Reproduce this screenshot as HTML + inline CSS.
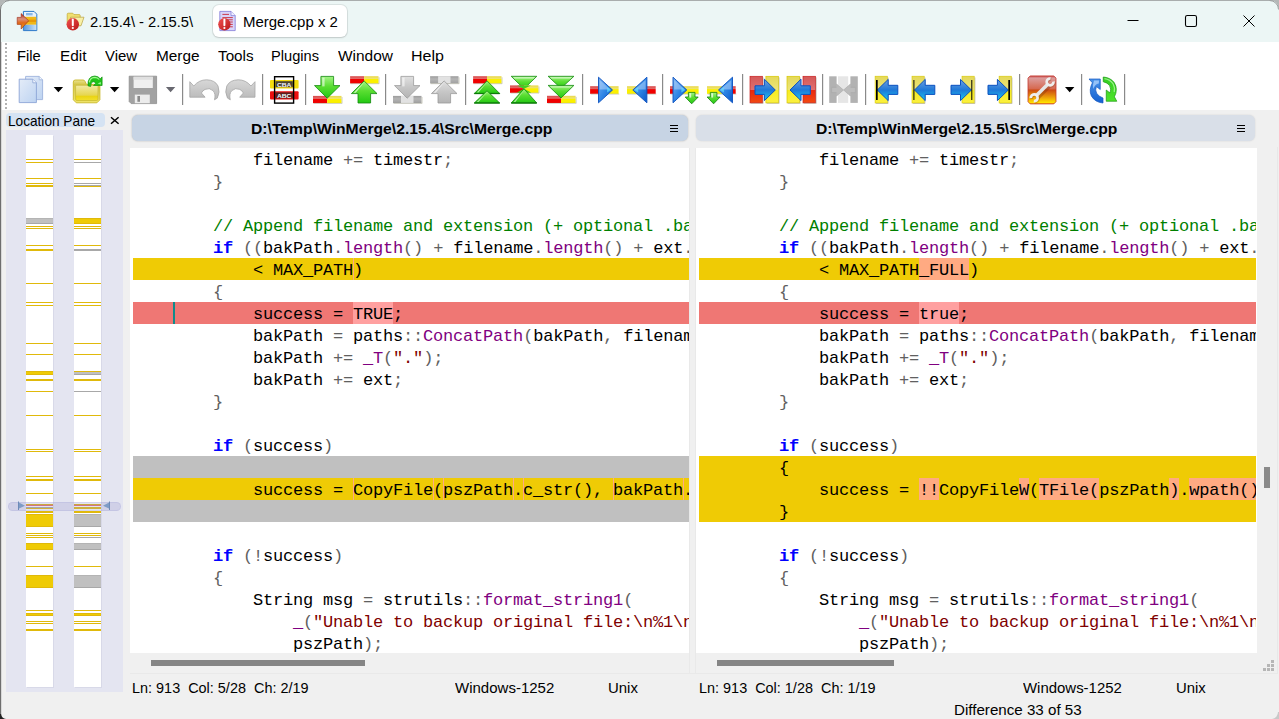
<!DOCTYPE html><html><head><meta charset="utf-8"><title>WinMerge</title><style>
*{box-sizing:border-box;margin:0;padding:0}
html,body{width:1279px;height:719px;overflow:hidden;background:#f0f0f0;font-family:"Liberation Sans",sans-serif}
.abs{position:absolute}
.lb{position:absolute;white-space:pre;transform-origin:0 0;display:block}
#title{position:absolute;left:0;top:0;width:1279px;height:42px;background:#ecf6f5}
#menu{position:absolute;left:0;top:42px;width:1279px;height:68px;background:#fff}
.sep{position:absolute;top:74px;width:1px;height:31px;background:#a0a0a0}
.ico{position:absolute;top:76px;width:28px;height:28px}
.dd{position:absolute;top:87px;width:0;height:0;border-left:4.5px solid transparent;border-right:4.5px solid transparent;border-top:5px solid #000}
.ed{position:absolute;top:148px;height:505px;background:#fff;overflow:hidden}
.row{position:absolute;left:3px;height:22px;line-height:25px;overflow:hidden;white-space:pre;font-family:"Liberation Mono",monospace;font-size:17px;letter-spacing:-0.2px;color:#000}
.k{color:#0000ff;font-weight:bold}
.c{color:#008000}
.o{color:#606060}
.f{color:#800080}
.s{color:#800000}
.y{background:#efcb05}
.r{background:#ef7774}
.g{background:#c0c0c0}
.w1{background:#ffaa82;padding:5px 0}
.w2{background:#ffa0a0;padding:5px 0}
.mk{position:absolute;top:0;width:1.7px;height:22px;background:#ffaa82}
.hdr{position:absolute;top:114.6px;height:26.6px;border-radius:6px}
.lp{position:absolute;background:#fff;top:135px;width:27px;height:552px;box-shadow:1px 1px 0 #d8d9e8}
.ln{position:absolute;left:0;width:27px}
</style></head><body>
<div id="title"></div>
<div class="abs" style="left:213px;top:5px;width:134px;height:32px;background:#fff;border-radius:6px;box-shadow:0 0 0 1px rgba(0,0,0,.07),0 1px 2px rgba(0,0,0,.12)"></div>
<span class="lb" style="left:90.26px;top:13px;font-size:15.5px;line-height:17px;height:17px;color:#000;transform:scaleX(0.9499);">2.15.4\ - 2.15.5\</span>
<span class="lb" style="left:242.50px;top:13px;font-size:15.5px;line-height:17px;height:17px;color:#000;transform:scaleX(0.9659);">Merge.cpp x 2</span>
<svg class="abs" style="left:0;top:0" width="360" height="42" viewBox="0 0 360 42"><defs>
<linearGradient id="tR" x1="0" y1="0" x2="1" y2="1"><stop offset="0" stop-color="#f05050"/><stop offset="1" stop-color="#b81818"/></linearGradient>
<linearGradient id="tA" x1="0" y1="0" x2="0" y2="1"><stop offset="0" stop-color="#b02010"/><stop offset=".35" stop-color="#d89080"/><stop offset=".6" stop-color="#e06818"/><stop offset="1" stop-color="#f0a010"/></linearGradient>
<linearGradient id="tD" x1="0" y1="0" x2="1" y2="0"><stop offset="0" stop-color="#5a9ade"/><stop offset="1" stop-color="#c8e0f8"/></linearGradient>
</defs><path d="M23.400 11.400h10.600l2.800 2.800v16.400h-13.400z" fill="#e8f2fc" stroke="#2a78c8" stroke-width="1"/><rect x="26" y="13" width="6.600" height="2.400" fill="#8ab8e8"/><rect x="24" y="16.800" width="12.200" height="8" fill="#f0b818"/><rect x="24" y="19.600" width="12.200" height="2.400" fill="#e89808"/><rect x="24" y="24.800" width="12.200" height="5.200" fill="url(#tD)"/><path d="M17.200 17.400h4v-3.800l7.400 7.200l-7.400 8.200v-4.600h-4z" fill="url(#tA)" stroke="#a02810" stroke-width=".6"/><path d="M67.200 14.200q0-1 1-1h4.600l1.200 1.400h5.200q1 0 1 1v9.800h-13z" fill="#f0e070" stroke="#c0a830" stroke-width=".7"/><path d="M70.600 17.200h13.400l-3 8.600h-12.400z" fill="#f8f0a8" stroke="#b8a040" stroke-width=".7"/><circle cx="72.800" cy="24.300" r="6.200" fill="url(#tR)"/><path d="M72.800 19.600v5.600" stroke="#fff" stroke-width="2" stroke-linecap="round"/><circle cx="72.800" cy="28" r="1.100" fill="#fff"/><path d="M219.800 11.400h11.200l4.200 4.200v15h-15.400z" fill="#d8d4fa" stroke="#8078d8" stroke-width=".8"/><path d="M231 11.400v4.200h4.200" fill="#f0f0ff" stroke="#8078d8" stroke-width=".7"/><path d="M222.4 14.4H229" stroke="#c82838" stroke-width=".9"/><path d="M222.4 17.6H232.8" stroke="#c82838" stroke-width=".9"/><path d="M222.4 19.8H232.8" stroke="#c82838" stroke-width=".9"/><path d="M222.4 22H232.8" stroke="#c82838" stroke-width=".9"/><path d="M222.4 24.4H232.8" stroke="#c82838" stroke-width=".9"/><path d="M222.4 26.8H232.8" stroke="#c82838" stroke-width=".9"/><circle cx="224.400" cy="24.300" r="6.200" fill="url(#tR)"/><path d="M224.400 19.600v5.600" stroke="#fff" stroke-width="2" stroke-linecap="round"/><circle cx="224.400" cy="28" r="1.100" fill="#fff"/></svg>
<svg class="abs" style="left:1120px;top:10px" width="150" height="22" viewBox="0 0 150 22"><path d="M7.5 10.5h11" stroke="#000" stroke-width="1" fill="none"/><rect x="65.5" y="5.5" width="11" height="11" rx="1.8" stroke="#000" stroke-width="1.1" fill="none"/><path d="M123.5 5.5l11 11M134.5 5.5l-11 11" stroke="#000" stroke-width="1" fill="none"/></svg>
<div id="menu"></div>
<span class="lb" style="left:17.42px;top:47px;font-size:15.5px;line-height:17px;height:17px;color:#000;transform:scaleX(0.9483);">File</span>
<span class="lb" style="left:59.57px;top:47px;font-size:15.5px;line-height:17px;height:17px;color:#000;transform:scaleX(0.9944);">Edit</span>
<span class="lb" style="left:104.93px;top:47px;font-size:15.5px;line-height:17px;height:17px;color:#000;transform:scaleX(0.9625);">View</span>
<span class="lb" style="left:155.57px;top:47px;font-size:15.5px;line-height:17px;height:17px;color:#000;transform:scaleX(0.9909);">Merge</span>
<span class="lb" style="left:218.09px;top:47px;font-size:15.5px;line-height:17px;height:17px;color:#000;transform:scaleX(0.9847);">Tools</span>
<span class="lb" style="left:271.33px;top:47px;font-size:15.5px;line-height:17px;height:17px;color:#000;transform:scaleX(0.9438);">Plugins</span>
<span class="lb" style="left:338.02px;top:47px;font-size:15.5px;line-height:17px;height:17px;color:#000;transform:scaleX(0.9963);">Window</span>
<span class="lb" style="left:411.32px;top:47px;font-size:15.5px;line-height:17px;height:17px;color:#000;transform:scaleX(1.0336);">Help</span>
<div class="abs" style="left:5px;top:43px;width:2px;height:66px;background:repeating-linear-gradient(to bottom,#b2b2b2 0,#b2b2b2 2px,transparent 2px,transparent 4px)"></div>
<svg class="abs" style="left:0;top:70px" width="1279" height="40" viewBox="0 70 1279 40"><defs>
<linearGradient id="gG" x1="0" y1="0" x2="0" y2="1"><stop offset="0" stop-color="#a2f484"/><stop offset=".45" stop-color="#5ade32"/><stop offset="1" stop-color="#22c812"/></linearGradient>
<linearGradient id="gGr" x1="0" y1="0" x2="0" y2="1"><stop offset="0" stop-color="#e0e0e0"/><stop offset=".5" stop-color="#c6c6c6"/><stop offset="1" stop-color="#b4b4b4"/></linearGradient>
<linearGradient id="gR" x1="0" y1="0" x2="0" y2="1"><stop offset="0" stop-color="#d84a4a"/><stop offset=".35" stop-color="#e36a6a"/><stop offset=".45" stop-color="#f00000"/><stop offset="1" stop-color="#f00000"/></linearGradient>
<linearGradient id="gY" x1="0" y1="0" x2="0" y2="1"><stop offset="0" stop-color="#e8d84a"/><stop offset=".35" stop-color="#f0e470"/><stop offset=".45" stop-color="#fbf000"/><stop offset="1" stop-color="#fbf000"/></linearGradient>
<linearGradient id="gGb" x1="0" y1="0" x2="0" y2="1"><stop offset="0" stop-color="#9c9c9c"/><stop offset=".4" stop-color="#b4b4b4"/><stop offset="1" stop-color="#a0a0a0"/></linearGradient>
<linearGradient id="gB" x1="0" y1="0" x2="1" y2="1"><stop offset="0" stop-color="#7ab0ee"/><stop offset=".5" stop-color="#2f86e6"/><stop offset="1" stop-color="#0a58c8"/></linearGradient>
<linearGradient id="gBh" x1="0" y1="0" x2="0" y2="1"><stop offset="0" stop-color="#6ea0e0"/><stop offset=".5" stop-color="#1f78d8"/><stop offset="1" stop-color="#18c8f0"/></linearGradient>
<linearGradient id="gDoc" x1="0" y1="0" x2="1" y2="1"><stop offset="0" stop-color="#e4ecf8"/><stop offset="1" stop-color="#bdd3f1"/></linearGradient>
<linearGradient id="gFold" x1="0" y1="0" x2="0" y2="1"><stop offset="0" stop-color="#f2eaa4"/><stop offset=".65" stop-color="#e6d650"/><stop offset=".72" stop-color="#ead414"/><stop offset="1" stop-color="#f2e02c"/></linearGradient><linearGradient id="gFoldB" x1="0" y1="0" x2="0" y2="1"><stop offset="0" stop-color="#ece290"/><stop offset=".2" stop-color="#d4c648"/><stop offset="1" stop-color="#f0e468"/></linearGradient>
<linearGradient id="gRedV" x1="0" y1="0" x2="0" y2="1"><stop offset="0" stop-color="#d45858"/><stop offset=".5" stop-color="#e07070"/><stop offset=".52" stop-color="#e82810"/><stop offset="1" stop-color="#f24a10"/></linearGradient>
<linearGradient id="gYelV" x1="0" y1="0" x2="0" y2="1"><stop offset="0" stop-color="#e4d858"/><stop offset=".5" stop-color="#ece478"/><stop offset=".52" stop-color="#f6ec20"/><stop offset="1" stop-color="#fbf040"/></linearGradient>
<linearGradient id="gOpt" x1="0" y1="0" x2="0" y2="1"><stop offset="0" stop-color="#c84848"/><stop offset=".08" stop-color="#dc9c9c"/><stop offset=".47" stop-color="#d6684e"/><stop offset=".5" stop-color="#cc4a12"/><stop offset=".75" stop-color="#ea9a0a"/><stop offset=".95" stop-color="#ffe000"/><stop offset="1" stop-color="#f8a010"/></linearGradient>
<linearGradient id="gRf1" x1="0" y1="0" x2="0" y2="1"><stop offset="0" stop-color="#4a94ea"/><stop offset="1" stop-color="#1460d0"/></linearGradient><linearGradient id="gRf2" x1="0" y1="0" x2="0" y2="1"><stop offset="0" stop-color="#30cc20"/><stop offset="1" stop-color="#4ee42a"/></linearGradient><linearGradient id="gUndo" x1="0" y1="0" x2="0" y2="1"><stop offset="0" stop-color="#d8d8d8"/><stop offset="1" stop-color="#b8b8b8"/></linearGradient>
</defs><rect x="182" y="74" width="1.2" height="31" fill="#8a8a8a"/><rect x="262" y="74" width="1.2" height="31" fill="#8a8a8a"/><rect x="305" y="74" width="1.2" height="31" fill="#8a8a8a"/><rect x="385" y="74" width="1.2" height="31" fill="#8a8a8a"/><rect x="465" y="74" width="1.2" height="31" fill="#8a8a8a"/><rect x="582" y="74" width="1.2" height="31" fill="#8a8a8a"/><rect x="662" y="74" width="1.2" height="31" fill="#8a8a8a"/><rect x="742" y="74" width="1.2" height="31" fill="#8a8a8a"/><rect x="822" y="74" width="1.2" height="31" fill="#8a8a8a"/><rect x="865" y="74" width="1.2" height="31" fill="#8a8a8a"/><rect x="1019" y="74" width="1.2" height="31" fill="#8a8a8a"/><rect x="1081" y="74" width="1.2" height="31" fill="#8a8a8a"/><rect x="1124" y="74" width="1.2" height="31" fill="#8a8a8a"/><path d="M53.7 87h9.4l-4.7 5.2z" fill="#000"/><path d="M109.9 87h9.4l-4.7 5.2z" fill="#000"/><path d="M165.9 87h9.4l-4.7 5.2z" fill="#686870"/><path d="M1065 87h9.4l-4.7 5.2z" fill="#000"/><path d="M25.6 76.4h13.6l3.4 3.4v19.8h-17z" fill="url(#gDoc)" stroke="#9db2dc" stroke-width=".9"/><path d="M39.2 76.4v3.4h3.4" fill="#f4f8fd" stroke="#9db2dc" stroke-width=".8"/><path d="M19.2 79.2h13.6l3.6 3.6v19.8h-17.2z" fill="url(#gDoc)" stroke="#8ba4d6" stroke-width=".9"/><path d="M32.8 79.2v3.6h3.6" fill="#f4f8fd" stroke="#8ba4d6" stroke-width=".8"/><path d="M73.300 82q0-2 2-2h7.800q1.200 0 1.800 1.200l1.600 3.200h11.400q2 0 2 2v13.400l-3 3h-20.600l-3-3z" fill="url(#gFoldB)" stroke="#c8b828" stroke-width=".9"/><path d="M75.600 86.300q0-1 1-1h20.400q1 0 1 1v12.800q0 1.400-1.400 1.400h-19.600q-1.400 0-1.400-1.400z" fill="url(#gFold)" stroke="#c0b030" stroke-width=".6"/><path d="M88 85.800q-.6-9.600 6.800-9.800q3.600.2 5.400 2.800l1.900-1.900v8.600h-8.600l2.300-2.300q-1-1.600-2.700-1.500q-2.400.4-2.500 4.800z" fill="#20c418" stroke="#109010" stroke-width=".7" stroke-linejoin="round"/><path d="M89.400 82.400q.6-5 5.400-5.100q2.800.2 4.400 2.200" stroke="#a0f890" stroke-width="1.200" fill="none"/><path d="M97.600 83.600l3.200-1.600v2.400z" fill="#b8ffb0" opacity=".8"/><path d="M129.2 76.2h27.400v27.400h-25.400l-2-2z" fill="#a2a2a2" stroke="#8e8e8e" stroke-width=".8"/><rect x="133.6" y="76.800" width="19.200" height="11.200" fill="#f0f0f0"/><rect x="133.600" y="76.800" width="19.200" height="3" fill="#e0e0e0"/><rect x="134.800" y="94.600" width="15" height="8.600" fill="#ececec"/><rect x="137.400" y="96" width="2.600" height="5.800" fill="#8a8a8a"/><path d="M189.800 81.700L193.800 86Q199 79.800 206.500 79.800Q215 80 218 86Q220.400 92 217.300 98.100L214.500 99.800Q216 94 213 90.600Q209.500 87.400 205 89.400Q202.600 90.600 201.400 93L205.100 97.200H189.800Z" fill="url(#gUndo)" stroke="#a6a6a6" stroke-width=".8"/><g transform="translate(444.8 0) scale(-1 1)"><path d="M189.800 81.700L193.800 86Q199 79.800 206.500 79.800Q215 80 218 86Q220.400 92 217.300 98.100L214.500 99.800Q216 94 213 90.600Q209.500 87.400 205 89.400Q202.600 90.600 201.400 93L205.100 97.200H189.800Z" fill="url(#gUndo)" stroke="#a6a6a6" stroke-width=".8"/></g><rect x="270" y="80" width="28.600" height="8.400" rx="1" fill="#f4dc10"/><rect x="270" y="91.200" width="28.600" height="8.400" rx="1" fill="#ec1010"/><rect x="275.600" y="81.200" width="17.200" height="6" fill="#4a4430"/><rect x="275.600" y="92.400" width="17.200" height="6" fill="#5a2020"/><text x="284.200" y="86.700" font-family="Liberation Sans" font-weight="bold" font-size="6.200" fill="#f4f4ff" text-anchor="middle" textLength="14.500" lengthAdjust="spacingAndGlyphs">CBA</text><text x="284.200" y="97.900" font-family="Liberation Sans" font-weight="bold" font-size="6.200" fill="#f4ffff" text-anchor="middle" textLength="14.500" lengthAdjust="spacingAndGlyphs">ABC</text><rect x="274.600" y="76.700" width="19" height="26.400" fill="none" stroke="#000" stroke-width="1.400"/><rect x="313" y="95.9" width="14.199999999999989" height="7.2" fill="url(#gR)"/><rect x="327.2" y="95.9" width="14.300000000000011" height="7.2" fill="url(#gY)"/><path d="M313.6 103.4h28.5v-6.4" stroke="#8a8a70" stroke-width=".7" fill="none" opacity=".55"/><path d="M320.9 76.400h12.700v9.200h6.400l-12.800 12.600l-12.700-12.600h6.400z" fill="url(#gG)" stroke="#12880e" stroke-width=".8"/><path d="M322.2 77.600h2.400v8.800h-2.400z" fill="#fff" opacity=".55"/><rect x="350.1" y="76.2" width="14.0" height="7.2" fill="url(#gR)"/><rect x="364.1" y="76.2" width="14.399999999999977" height="7.2" fill="url(#gY)"/><path d="M350.70000000000005 83.7h28.4v-6.4" stroke="#8a8a70" stroke-width=".7" fill="none" opacity=".55"/><path d="M364.1 80.900l12.900 12.700h-6.400v9.400h-12.600v-9.400h-6.600z" fill="url(#gG)" stroke="#12880e" stroke-width=".8"/><path d="M364.1 82.400l-10.400 10.400h2z" fill="#fff" opacity=".7"/><rect x="393" y="95.9" width="28.5" height="7.2" fill="url(#gGb)"/><rect x="401" y="95.9" width="12.5" height="7.2" fill="#e2e2e2"/><path d="M393.6 103.4h28.5v-6.4" stroke="#8a8a70" stroke-width=".7" fill="none" opacity=".55"/><path d="M400.9 76.400h12.700v9.200h6.400l-12.800 12.600l-12.700-12.600h6.400z" fill="url(#gGr)" stroke="#9a9a9a" stroke-width=".8"/><path d="M402.2 77.600h2.400v8.800h-2.400z" fill="#fff" opacity=".55"/><rect x="430.1" y="76.2" width="28.4" height="7.2" fill="url(#gGb)"/><rect x="438.1" y="76.2" width="12.399999999999999" height="7.2" fill="#e2e2e2"/><path d="M430.70000000000005 83.7h28.4v-6.4" stroke="#8a8a70" stroke-width=".7" fill="none" opacity=".55"/><path d="M444.1 80.900l12.900 12.700h-6.400v9.400h-12.600v-9.400h-6.600z" fill="url(#gGr)" stroke="#9a9a9a" stroke-width=".8"/><path d="M444.1 82.400l-10.400 10.400h2z" fill="#fff" opacity=".7"/><rect x="473.1" y="76.2" width="13.899999999999977" height="7.2" fill="url(#gR)"/><rect x="487" y="76.2" width="14.5" height="7.2" fill="url(#gY)"/><path d="M473.70000000000005 83.7h28.4v-6.4" stroke="#8a8a70" stroke-width=".7" fill="none" opacity=".55"/><path d="M487 80.8l12.7 12.700000000000003h-25.4z" fill="url(#gG)" stroke="#12880e" stroke-width=".8"/><path d="M487 82.2l-10.299999999999999 10.300000000000002h1.800z" fill="#fff" opacity=".6"/><path d="M474.3 93.5h25.4" stroke="#0e7a0a" stroke-width="1.300"/><path d="M487 90.8l12.7 12.200000000000003h-25.4z" fill="url(#gG)" stroke="#12880e" stroke-width=".8"/><path d="M487 92.2l-10.299999999999999 9.800000000000002h1.800z" fill="#fff" opacity=".6"/><path d="M474.3 103h25.4" stroke="#0e7a0a" stroke-width="1.300"/><path d="M511.2 76.3h25.6l-12.8 12.5z" fill="url(#gG)" stroke="#12880e" stroke-width=".8"/><path d="M513.2 77.3h21.6l-1.200 1.200h-19.200000000000003z" fill="#fff" opacity=".6"/><rect x="510" y="85.4" width="14" height="7.4" fill="url(#gR)"/><rect x="524" y="85.4" width="14.399999999999977" height="7.4" fill="url(#gY)"/><path d="M510.6 93.10000000000001h28.4v-6.6000000000000005" stroke="#8a8a70" stroke-width=".7" fill="none" opacity=".55"/><path d="M517 85.400h14l-7 3.400z" fill="#3ed222"/><path d="M516.600 92.800h14.800l-7.400-4z" fill="#3ed222"/><path d="M524 88.8l12.8 14.200000000000003h-25.6z" fill="url(#gG)" stroke="#12880e" stroke-width=".8"/><path d="M524 90.2l-10.4 11.800000000000002h1.800z" fill="#fff" opacity=".6"/><path d="M511.2 103h25.6" stroke="#0e7a0a" stroke-width="1.300"/><path d="M548.1 76.3h25.8l-12.9 12.0z" fill="url(#gG)" stroke="#12880e" stroke-width=".8"/><path d="M550.1 77.3h21.8l-1.200 1.200h-19.4z" fill="#fff" opacity=".6"/><rect x="547" y="95.8" width="14" height="7.2" fill="url(#gR)"/><rect x="561" y="95.8" width="14.600000000000023" height="7.2" fill="url(#gY)"/><path d="M547.6 103.3h28.6v-6.4" stroke="#8a8a70" stroke-width=".7" fill="none" opacity=".55"/><path d="M548.1 85.4h25.8l-12.9 12.599999999999994z" fill="url(#gG)" stroke="#12880e" stroke-width=".8"/><path d="M550.1 86.4h21.8l-1.200 1.200h-19.4z" fill="#fff" opacity=".6"/><rect x="590.1" y="86.200" width="9.899999999999977" height="7.600" fill="url(#gR)"/><path d="M590.7 94.100h9.899999999999977" stroke="#8a8a70" stroke-width=".7" opacity=".55"/><rect x="606" y="86.200" width="12.600000000000023" height="7.600" fill="url(#gY)"/><path d="M606.6 94.100h12.600000000000023" stroke="#8a8a70" stroke-width=".7" opacity=".55"/><path d="M598.5 77.200l14.0 12.800l-14.0 12.800z" fill="url(#gB)" stroke="#0a50c0" stroke-width=".9" stroke-linejoin="round"/><path d="M599.7 80l10.8 9.600h-10.8z" fill="#cfe4ff" opacity=".45"/><path d="M611.1 90l-4 -3l0 5.600z" fill="#60e0ff" opacity=".7"/><rect x="627" y="86.200" width="13" height="7.600" fill="url(#gY)"/><path d="M627.6 94.100h13" stroke="#8a8a70" stroke-width=".7" opacity=".55"/><rect x="646" y="86.200" width="9.700000000000045" height="7.600" fill="url(#gR)"/><path d="M646.6 94.100h9.700000000000045" stroke="#8a8a70" stroke-width=".7" opacity=".55"/><path d="M646.9 77.200l-14.100000000000023 12.800l14.100000000000023 12.800z" fill="url(#gB)" stroke="#0a50c0" stroke-width=".9" stroke-linejoin="round"/><path d="M645.6999999999999 80l-10.900000000000023 9.600h10.900000000000023z" fill="#cfe4ff" opacity=".45"/><path d="M634.1999999999999 90l4 -3l0 5.600z" fill="#60e0ff" opacity=".7"/><rect x="670" y="86.200" width="4" height="7.600" fill="url(#gR)"/><path d="M670.6 94.100h4" stroke="#8a8a70" stroke-width=".7" opacity=".55"/><rect x="680" y="86.200" width="18.600000000000023" height="7.600" fill="url(#gY)"/><path d="M680.6 94.100h18.600000000000023" stroke="#8a8a70" stroke-width=".7" opacity=".55"/><path d="M673 77.200l13.799999999999955 12.800l-13.799999999999955 12.800z" fill="url(#gB)" stroke="#0a50c0" stroke-width=".9" stroke-linejoin="round"/><path d="M674.2 80l10.599999999999955 9.600h-10.599999999999955z" fill="#cfe4ff" opacity=".45"/><path d="M685.4 90l-4 -3l0 5.600z" fill="#60e0ff" opacity=".7"/><path d="M688.4000000000001 92.400h6.600v4.600h3.200l-6.500 6.800l-6.500-6.800h3.200z" fill="url(#gG)" stroke="#12800e" stroke-width=".8"/><path d="M689.4000000000001 93.200h1.800v4.400h-1.800z" fill="#fff" opacity=".7"/><rect x="707" y="86.200" width="19" height="7.600" fill="url(#gY)"/><path d="M707.6 94.100h19" stroke="#8a8a70" stroke-width=".7" opacity=".55"/><rect x="731.5" y="86.200" width="4.2000000000000455" height="7.600" fill="url(#gR)"/><path d="M732.1 94.100h4.2000000000000455" stroke="#8a8a70" stroke-width=".7" opacity=".55"/><path d="M732.5 77.200l-14.0 12.800l14.0 12.800z" fill="url(#gB)" stroke="#0a50c0" stroke-width=".9" stroke-linejoin="round"/><path d="M731.3 80l-10.8 9.600h10.8z" fill="#cfe4ff" opacity=".45"/><path d="M719.9 90l4 -3l0 5.600z" fill="#60e0ff" opacity=".7"/><path d="M710.3000000000001 92.400h6.600v4.600h3.200l-6.500 6.800l-6.500-6.800h3.200z" fill="url(#gG)" stroke="#12800e" stroke-width=".8"/><path d="M711.3000000000001 93.200h1.800v4.400h-1.800z" fill="#fff" opacity=".7"/><rect x="750" y="76.300" width="12.4" height="26.600" fill="url(#gRedV)" stroke="#c82020" stroke-width=".7"/><path d="M750.8 103.400h12.4v-26" stroke="#807860" stroke-width=".7" fill="none" opacity=".5"/><rect x="765.9" y="76.300" width="12.5" height="26.600" fill="url(#gYelV)" stroke="#d8c800" stroke-width=".7"/><path d="M766.6999999999999 103.400h12.5v-26" stroke="#807860" stroke-width=".7" fill="none" opacity=".5"/><path d="M755 85.800H764.4V79.200L775.3 90L764.4 100.600V94.400H755z" fill="url(#gBh)" stroke="#0a50c0" stroke-width="1" stroke-linejoin="round"/><rect x="787" y="76.300" width="12.5" height="26.600" fill="url(#gYelV)" stroke="#d8c800" stroke-width=".7"/><path d="M787.8 103.400h12.5v-26" stroke="#807860" stroke-width=".7" fill="none" opacity=".5"/><rect x="803" y="76.300" width="12.5" height="26.600" fill="url(#gRedV)" stroke="#c82020" stroke-width=".7"/><path d="M803.8 103.400h12.5v-26" stroke="#807860" stroke-width=".7" fill="none" opacity=".5"/><path d="M810.3 85.800H801V79.200L790 90L801 100.600V94.400H810.3z" fill="url(#gBh)" stroke="#0a50c0" stroke-width="1" stroke-linejoin="round"/><rect x="829.200" y="76.300" width="7.400" height="26.600" fill="#b2b2b2"/><rect x="838" y="76.300" width="10.200" height="26.600" fill="#e6e6e6"/><rect x="850.400" y="76.300" width="7.400" height="26.600" fill="#b2b2b2"/><path d="M831.600 87.400h5v-3.400l6.800 6l-6.800 6v-3.400h-5z" fill="#bcbcbc" stroke="#a8a8a8" stroke-width=".6"/><path d="M855.400 87.400h-5v-3.400l-6.800 6l6.800 6v-3.400h5z" fill="#bcbcbc" stroke="#a8a8a8" stroke-width=".6"/><rect x="875.1" y="76.200" width="12.200" height="26.800" fill="url(#gYelV)" stroke="#d8c800" stroke-width=".6"/><path d="M875.9 103.500h12.200v-26" stroke="#807860" stroke-width=".7" fill="none" opacity=".5"/><path d="M877.3 90L888.2 79.400V85.300H897.8V94.400H888.2V100.600z" fill="url(#gBh)" stroke="#0a50c0" stroke-width="1" stroke-linejoin="round"/><rect x="876" y="80" width="1.700" height="20" fill="#000"/><rect x="912" y="76.200" width="12.200" height="26.800" fill="url(#gYelV)" stroke="#d8c800" stroke-width=".6"/><path d="M912.8 103.500h12.200v-26" stroke="#807860" stroke-width=".7" fill="none" opacity=".5"/><path d="M914.5 90L925.2 79.400V85.300H934.8V94.400H925.2V100.600z" fill="url(#gBh)" stroke="#0a50c0" stroke-width="1" stroke-linejoin="round"/><rect x="913.400" y="80" width="1" height="20" fill="#000"/><rect x="962" y="76.200" width="12.200" height="26.800" fill="url(#gYelV)" stroke="#d8c800" stroke-width=".6"/><path d="M962.8 103.500h12.200v-26" stroke="#807860" stroke-width=".7" fill="none" opacity=".5"/><path d="M971.4 90L960.5 79.400V85.300H951V94.400H960.5V100.600z" fill="url(#gBh)" stroke="#0a50c0" stroke-width="1" stroke-linejoin="round"/><rect x="971.300" y="80" width="1" height="20" fill="#000"/><rect x="999.1" y="76.200" width="12.200" height="26.800" fill="url(#gYelV)" stroke="#d8c800" stroke-width=".6"/><path d="M999.9 103.500h12.200v-26" stroke="#807860" stroke-width=".7" fill="none" opacity=".5"/><path d="M1008.3 90L997.4 79.400V85.300H988V94.400H997.4V100.600z" fill="url(#gBh)" stroke="#0a50c0" stroke-width="1" stroke-linejoin="round"/><rect x="1008.300" y="80" width="1.700" height="20" fill="#000"/><path d="M1030.200 75.900h23.600l2.200 2.200v23.600l-2.200 2.200h-23.600l-2.200-2.200v-23.600z" fill="url(#gOpt)" stroke="#c43a30" stroke-width=".8"/><path d="M1037.400 96.600L1048.400 85.600" stroke="#7a3008" stroke-width="3.600" opacity=".35" transform="translate(.9 .9)"/><path d="M1053.47 81.49A3.4 3.4 0 1 1 1050.51 78.53" stroke="#7a3008" stroke-width="2.800" fill="none" opacity=".3" transform="translate(.8 .8)"/><path d="M1030.83 98.21A3.4 3.4 0 1 1 1033.79 101.17" stroke="#7a3008" stroke-width="2.800" fill="none" opacity=".3" transform="translate(.8 .8)"/><path d="M1036.200 95.800L1048 84" stroke="#e6e6e6" stroke-width="3.500"/><path d="M1053.47 81.49A3.4 3.4 0 1 1 1050.51 78.53" stroke="#efefef" stroke-width="2.700" fill="none"/><path d="M1030.83 98.21A3.4 3.4 0 1 1 1033.79 101.17" stroke="#efefef" stroke-width="2.700" fill="none"/><path d="M1089 79H1100.250V89.500L1096.400 86.600Q1094.800 90 1096.600 93.200Q1098.600 96.600 1103 98V103Q1095 102.400 1091.400 96Q1088.600 90 1092.400 82.800Z" fill="url(#gRf1)" stroke="#1458c0" stroke-width=".7" stroke-linejoin="round"/><path d="M1094 80.400h5l-.2 3q-4 .6-5.600 5.600q-.8-4.400 .8-8.600z" fill="#b8d8ff" opacity=".7"/><path d="M1103.250 77Q1110.500 77.600 1114.200 82.600Q1118.400 89.400 1114.400 96.800L1116.800 101.250H1106.250V90L1110 93Q1111.600 89 1109.600 85.600Q1107.600 82.600 1103.250 81.750Z" fill="url(#gRf2)" stroke="#189810" stroke-width=".7" stroke-linejoin="round"/><path d="M1104.400 78.600q6 .8 8.800 5.400q2 3.600 1 8" stroke="#b0f8a0" stroke-width="1.300" fill="none" opacity=".8"/></svg>
<div class="abs" style="left:6px;top:112.8px;width:98.8px;height:14.7px;background:#d5e3f3;border-radius:4px"></div>
<span class="lb" style="left:8.11px;top:113px;font-size:14.8px;line-height:16px;height:16px;color:#000;transform:scaleX(0.9217);">Location Pane</span>
<svg class="abs" style="left:108px;top:114px" width="14" height="14" viewBox="108 114 14 14"><path d="M111 117.300l7.600 6.500M118.600 117.300l-7.600 6.500" stroke="#000" stroke-width="1.500" fill="none"/></svg>
<div class="abs" style="left:6px;top:130px;width:117px;height:562px;background:#e4e5f1"></div>
<div class="lp" style="left:26px"><div class="ln" style="top:24px;height:1px;background:#e0b90b"></div><div class="ln" style="top:27px;height:1px;background:#e0b90b"></div><div class="ln" style="top:43px;height:1px;background:#e0b90b"></div><div class="ln" style="top:48px;height:1px;background:#e0b90b"></div><div class="ln" style="top:50px;height:1px;background:#e0b90b"></div><div class="ln" style="top:51px;height:1px;background:#e0b90b"></div><div class="ln" style="top:83px;height:6px;background:#c0c0c0;border-top:1px solid #b4b4b4;border-bottom:1px solid #a8a8a8"></div><div class="ln" style="top:91px;height:1px;background:#e0b90b"></div><div class="ln" style="top:93px;height:1px;background:#e0b90b"></div><div class="ln" style="top:110px;height:1px;background:#e0b90b"></div><div class="ln" style="top:114px;height:2px;background:#e0b90b"></div><div class="ln" style="top:148px;height:1px;background:#e0b90b"></div><div class="ln" style="top:167px;height:1px;background:#e0b90b"></div><div class="ln" style="top:170px;height:1px;background:#e0b90b"></div><div class="ln" style="top:208px;height:1px;background:#e0b90b"></div><div class="ln" style="top:219px;height:1px;background:#e0b90b"></div><div class="ln" style="top:236px;height:4px;background:#efcb05;border-top:1px solid #e0b90b;border-bottom:1px solid #e0b90b"></div><div class="ln" style="top:244px;height:2px;background:#e0b90b"></div><div class="ln" style="top:256px;height:1px;background:#e0b90b"></div><div class="ln" style="top:280px;height:1px;background:#e0b90b"></div><div class="ln" style="top:314px;height:1px;background:#e0b90b"></div><div class="ln" style="top:316px;height:1px;background:#e0b90b"></div><div class="ln" style="top:341px;height:1px;background:#e0b90b"></div><div class="ln" style="top:344px;height:2px;background:#e0b90b"></div><div class="ln" style="top:358px;height:1px;background:#e0b90b"></div><div class="ln" style="top:369px;height:1px;background:#dbb00c"></div><div class="ln" style="top:370px;height:1px;background:#e8696a"></div><div class="ln" style="top:372px;height:1px;background:#a8a8a8"></div><div class="ln" style="top:373px;height:1px;background:#e0b90b"></div><div class="ln" style="top:376px;height:2px;background:#e0b90b"></div><div class="ln" style="top:379px;height:13px;background:#efcb05;border-top:1px solid #e0b90b;border-bottom:1px solid #e0b90b"></div><div class="ln" style="top:398px;height:1px;background:#e0b90b"></div><div class="ln" style="top:400px;height:1px;background:#e0b90b"></div><div class="ln" style="top:402px;height:1px;background:#e0b90b"></div><div class="ln" style="top:408px;height:7px;background:#efcb05;border-top:1px solid #e0b90b;border-bottom:1px solid #e0b90b"></div><div class="ln" style="top:431px;height:1px;background:#e0b90b"></div><div class="ln" style="top:440px;height:13px;background:#efcb05;border-top:1px solid #e0b90b;border-bottom:1px solid #e0b90b"></div><div class="ln" style="top:475px;height:1px;background:#e0b90b"></div><div class="ln" style="top:478px;height:3px;background:#efcb05;border-top:1px solid #e0b90b;border-bottom:1px solid #e0b90b"></div><div class="ln" style="top:486px;height:1px;background:#e0b90b"></div><div class="ln" style="top:488px;height:1px;background:#e0b90b"></div><div class="ln" style="top:494px;height:2px;background:#e0b90b"></div></div>
<div class="lp" style="left:74px"><div class="ln" style="top:24px;height:1px;background:#e0b90b"></div><div class="ln" style="top:27px;height:1px;background:#a8a8a8"></div><div class="ln" style="top:43px;height:1px;background:#e0b90b"></div><div class="ln" style="top:48px;height:1px;background:#a8a8a8"></div><div class="ln" style="top:50px;height:1px;background:#a8a8a8"></div><div class="ln" style="top:51px;height:1px;background:#e0b90b"></div><div class="ln" style="top:83px;height:6px;background:#efcb05;border-top:1px solid #e0b90b;border-bottom:1px solid #e0b90b"></div><div class="ln" style="top:91px;height:1px;background:#e0b90b"></div><div class="ln" style="top:93px;height:1px;background:#e0b90b"></div><div class="ln" style="top:110px;height:1px;background:#e0b90b"></div><div class="ln" style="top:114px;height:2px;background:#a8a8a8"></div><div class="ln" style="top:148px;height:1px;background:#e0b90b"></div><div class="ln" style="top:167px;height:1px;background:#e0b90b"></div><div class="ln" style="top:170px;height:1px;background:#e0b90b"></div><div class="ln" style="top:208px;height:1px;background:#e0b90b"></div><div class="ln" style="top:219px;height:1px;background:#e0b90b"></div><div class="ln" style="top:236px;height:4px;background:#c0c0c0;border-top:1px solid #e0b90b;border-bottom:1px solid #a8a8a8"></div><div class="ln" style="top:244px;height:2px;background:#e0b90b"></div><div class="ln" style="top:256px;height:1px;background:#a8a8a8"></div><div class="ln" style="top:280px;height:1px;background:#e0b90b"></div><div class="ln" style="top:314px;height:1px;background:#e0b90b"></div><div class="ln" style="top:316px;height:1px;background:#e0b90b"></div><div class="ln" style="top:341px;height:1px;background:#e0b90b"></div><div class="ln" style="top:344px;height:2px;background:#e0b90b"></div><div class="ln" style="top:358px;height:1px;background:#e0b90b"></div><div class="ln" style="top:369px;height:1px;background:#dbb00c"></div><div class="ln" style="top:370px;height:1px;background:#e8696a"></div><div class="ln" style="top:372px;height:1px;background:#e0b90b"></div><div class="ln" style="top:373px;height:1px;background:#e0b90b"></div><div class="ln" style="top:376px;height:2px;background:#e0b90b"></div><div class="ln" style="top:379px;height:13px;background:#c0c0c0;border-top:1px solid #b4b4b4;border-bottom:1px solid #a8a8a8"></div><div class="ln" style="top:398px;height:1px;background:#e0b90b"></div><div class="ln" style="top:400px;height:1px;background:#e0b90b"></div><div class="ln" style="top:402px;height:1px;background:#a8a8a8"></div><div class="ln" style="top:408px;height:7px;background:#c0c0c0;border-top:1px solid #b4b4b4;border-bottom:1px solid #a8a8a8"></div><div class="ln" style="top:431px;height:1px;background:#e0b90b"></div><div class="ln" style="top:440px;height:13px;background:#c0c0c0;border-top:1px solid #b4b4b4;border-bottom:1px solid #a8a8a8"></div><div class="ln" style="top:475px;height:1px;background:#e0b90b"></div><div class="ln" style="top:478px;height:3px;background:#efcb05;border-top:1px solid #e0b90b;border-bottom:1px solid #e0b90b"></div><div class="ln" style="top:486px;height:1px;background:#e0b90b"></div><div class="ln" style="top:488px;height:1px;background:#e0b90b"></div><div class="ln" style="top:494px;height:2px;background:#e0b90b"></div></div>
<div class="abs" style="left:8px;top:502px;width:113px;height:9px;border-radius:4.5px;background:rgba(150,150,205,.26);border:1px solid rgba(150,150,210,.18)"></div>
<svg class="abs" style="left:17px;top:501px" width="95" height="10" viewBox="0 0 95 10"><path d="M1 1v7l7-3.3z" fill="#7f9cc6"/><path d="M1.5 0.5v8.5" stroke="#6c8ab8" stroke-width="1"/><path d="M93 1v7l-7-3.3z" fill="#7f9cc6"/><path d="M92.5 0.5v8.5" stroke="#6c8ab8" stroke-width="1"/></svg>
<div class="hdr" style="left:132.4px;width:555.2px;background:#c7d4e4;box-shadow:0 0 2px rgba(0,0,0,.25)"></div>
<div class="hdr" style="left:696px;width:559px;background:#d9dfe8;box-shadow:0 0 2px rgba(0,0,0,.12)"></div>
<span class="lb" style="left:251.48px;top:120px;font-size:15.2px;line-height:17px;height:17px;font-weight:bold;color:#000;transform:scaleX(1.0336);">D:\Temp\WinMerge\2.15.4\Src\Merge.cpp</span>
<span class="lb" style="left:816.48px;top:120px;font-size:15.2px;line-height:17px;height:17px;font-weight:bold;color:#000;transform:scaleX(1.0336);">D:\Temp\WinMerge\2.15.5\Src\Merge.cpp</span>
<div class="abs" style="left:670px;top:125px;width:8px;height:7px;background:linear-gradient(#000 0,#000 1.4px,transparent 1.4px,transparent 3px,#000 3px,#000 4.4px,transparent 4.4px,transparent 6px,#000 6px)"></div>
<div class="abs" style="left:1237px;top:125px;width:8px;height:7px;background:linear-gradient(#000 0,#000 1.4px,transparent 1.4px,transparent 3px,#000 3px,#000 4.4px,transparent 4.4px,transparent 6px,#000 6px)"></div>
<div class="ed" style="left:130px;width:559px"><div class="row " style="top:0px;width:556px">            filename <span class="o">+=</span> timestr<span class="o">;</span></div><div class="row " style="top:22px;width:556px">        <span class="o">}</span></div><div class="row " style="top:44px;width:556px"></div><div class="row " style="top:66px;width:556px">        <span class="c">// Append filename and extension (+ optional .bak) to path</span></div><div class="row " style="top:88px;width:556px">        <span class="k">if</span> <span class="o">((</span>bakPath<span class="o">.</span><span class="f">length</span><span class="o">()</span> <span class="o">+</span> filename<span class="o">.</span><span class="f">length</span><span class="o">()</span> <span class="o">+</span> ext<span class="o">.</span><span class="f">length</span><span class="o">())</span></div><div class="row y" style="top:110px;width:556px">            &lt; MAX_PATH)<i class="mk" style="left:219.8px"></i></div><div class="row " style="top:132px;width:556px">        <span class="o">{</span></div><div class="row r" style="top:154px;width:556px">            success = <span class="w2">TRUE</span>;<i class="abs" style="left:40px;top:0;width:2px;height:22px;background:#108b8b"></i></div><div class="row " style="top:176px;width:556px">            bakPath <span class="o">=</span> paths<span class="o">::</span><span class="f">ConcatPath</span><span class="o">(</span>bakPath<span class="o">,</span> filename<span class="o">);</span></div><div class="row " style="top:198px;width:556px">            bakPath <span class="o">+=</span> <span class="f">_T</span><span class="o">(</span><span class="s">"."</span><span class="o">);</span></div><div class="row " style="top:220px;width:556px">            bakPath <span class="o">+=</span> ext<span class="o">;</span></div><div class="row " style="top:242px;width:556px">        <span class="o">}</span></div><div class="row " style="top:264px;width:556px"></div><div class="row " style="top:286px;width:556px">        <span class="k">if</span> <span class="o">(</span>success<span class="o">)</span></div><div class="row g" style="top:308px;width:556px"></div><div class="row y" style="top:330px;width:556px">            success = CopyFile(pszPath.c_str(), bakPath.c_str(), FALSE);<i class="mk" style="left:219.8px"></i><i class="mk" style="left:299.8px"></i><i class="mk" style="left:309.8px"></i><i class="mk" style="left:379.8px"></i><i class="mk" style="left:389.8px"></i><i class="mk" style="left:479.8px"></i><i class="mk" style="left:549.8px"></i></div><div class="row g" style="top:352px;width:556px"></div><div class="row " style="top:374px;width:556px"></div><div class="row " style="top:396px;width:556px">        <span class="k">if</span> <span class="o">(!</span>success<span class="o">)</span></div><div class="row " style="top:418px;width:556px">        <span class="o">{</span></div><div class="row " style="top:440px;width:556px">            String msg <span class="o">=</span> strutils<span class="o">::</span><span class="f">format_string1</span><span class="o">(</span></div><div class="row " style="top:462px;width:556px">                <span class="f">_</span><span class="o">(</span><span class="s">"Unable to backup original file:\n%1\n\nContinue anyway?"</span><span class="o">),</span></div><div class="row " style="top:484px;width:556px">                pszPath<span class="o">);</span></div></div>
<div class="ed" style="left:696px;width:561px"><div class="row " style="top:0px;width:557px">            filename <span class="o">+=</span> timestr<span class="o">;</span></div><div class="row " style="top:22px;width:557px">        <span class="o">}</span></div><div class="row " style="top:44px;width:557px"></div><div class="row " style="top:66px;width:557px">        <span class="c">// Append filename and extension (+ optional .bak) to path</span></div><div class="row " style="top:88px;width:557px">        <span class="k">if</span> <span class="o">((</span>bakPath<span class="o">.</span><span class="f">length</span><span class="o">()</span> <span class="o">+</span> filename<span class="o">.</span><span class="f">length</span><span class="o">()</span> <span class="o">+</span> ext<span class="o">.</span><span class="f">length</span><span class="o">())</span></div><div class="row y" style="top:110px;width:557px">            &lt; MAX_PATH<span class="w1">_FULL</span>)</div><div class="row " style="top:132px;width:557px">        <span class="o">{</span></div><div class="row r" style="top:154px;width:557px">            success = <span class="w2">true</span>;</div><div class="row " style="top:176px;width:557px">            bakPath <span class="o">=</span> paths<span class="o">::</span><span class="f">ConcatPath</span><span class="o">(</span>bakPath<span class="o">,</span> filename<span class="o">);</span></div><div class="row " style="top:198px;width:557px">            bakPath <span class="o">+=</span> <span class="f">_T</span><span class="o">(</span><span class="s">"."</span><span class="o">);</span></div><div class="row " style="top:220px;width:557px">            bakPath <span class="o">+=</span> ext<span class="o">;</span></div><div class="row " style="top:242px;width:557px">        <span class="o">}</span></div><div class="row " style="top:264px;width:557px"></div><div class="row " style="top:286px;width:557px">        <span class="k">if</span> <span class="o">(</span>success<span class="o">)</span></div><div class="row y" style="top:308px;width:557px">        {</div><div class="row y" style="top:330px;width:557px">            success = <span class="w1">!!</span>CopyFile<span class="w1">W</span>(<span class="w1">TFile(</span>pszPath<span class="w1">)</span>.<span class="w1">wpath()</span>, <span class="w1">TFile(</span>bakPath<span class="w1">)</span>.<span class="w1">wpath()</span>, FALSE);</div><div class="row y" style="top:352px;width:557px">        }</div><div class="row " style="top:374px;width:557px"></div><div class="row " style="top:396px;width:557px">        <span class="k">if</span> <span class="o">(!</span>success<span class="o">)</span></div><div class="row " style="top:418px;width:557px">        <span class="o">{</span></div><div class="row " style="top:440px;width:557px">            String msg <span class="o">=</span> strutils<span class="o">::</span><span class="f">format_string1</span><span class="o">(</span></div><div class="row " style="top:462px;width:557px">                <span class="f">_</span><span class="o">(</span><span class="s">"Unable to backup original file:\n%1\n\nContinue anyway?"</span><span class="o">),</span></div><div class="row " style="top:484px;width:557px">                pszPath<span class="o">);</span></div></div>
<div class="abs" style="left:151px;top:660px;width:214px;height:6px;background:#858585"></div>
<div class="abs" style="left:717px;top:660px;width:177px;height:6px;background:#858585"></div>
<div class="abs" style="left:1264px;top:467px;width:6px;height:21px;background:#8a8a8a"></div>
<div class="abs" style="left:130px;top:673px;width:1147px;height:1px;background:#e9e9e9"></div>
<div class="abs" style="left:689px;top:148px;width:1px;height:525px;background:#e9e9e9"></div><div class="abs" style="left:695px;top:148px;width:1px;height:525px;background:#e9e9e9"></div>
<svg class="abs" style="left:1262px;top:659px" width="14" height="14" viewBox="1262 659 14 14"><rect x="1271" y="660" width="3" height="3" fill="#b6b6b6"/><rect x="1267" y="664" width="3" height="3" fill="#b6b6b6"/><rect x="1271" y="664" width="3" height="3" fill="#b6b6b6"/><rect x="1263" y="668" width="3" height="3" fill="#b6b6b6"/><rect x="1267" y="668" width="3" height="3" fill="#b6b6b6"/><rect x="1271" y="668" width="3" height="3" fill="#b6b6b6"/></svg>
<div class="abs" style="left:1277px;top:147px;width:1px;height:527px;background:#e8e8e8"></div>
<span class="lb" style="left:132.15px;top:679px;font-size:15.5px;line-height:17px;height:17px;color:#000;transform:scaleX(0.9311);">Ln: 913  Col: 5/28  Ch: 2/19</span>
<span class="lb" style="left:455.32px;top:679px;font-size:15.5px;line-height:17px;height:17px;color:#000;transform:scaleX(0.9687);">Windows-1252</span>
<span class="lb" style="left:608.28px;top:679px;font-size:15.5px;line-height:17px;height:17px;color:#000;transform:scaleX(0.9635);">Unix</span>
<span class="lb" style="left:699.15px;top:679px;font-size:15.5px;line-height:17px;height:17px;color:#000;transform:scaleX(0.9311);">Ln: 913  Col: 1/28  Ch: 1/19</span>
<span class="lb" style="left:1023.23px;top:679px;font-size:15.5px;line-height:17px;height:17px;color:#000;transform:scaleX(0.9638);">Windows-1252</span>
<span class="lb" style="left:1175.88px;top:679px;font-size:15.5px;line-height:17px;height:17px;color:#000;transform:scaleX(0.9602);">Unix</span>
<span class="lb" style="left:953.99px;top:701px;font-size:15.5px;line-height:17px;height:17px;color:#000;transform:scaleX(0.9767);">Difference 33 of 53</span>
<div class="abs" style="left:0;top:0;width:1279px;height:1px;background:#a9adad"></div>
<div class="abs" style="left:0;top:0;width:1px;height:719px;background:#6e6e6e"></div>
<div class="abs" style="left:1px;top:42px;width:1px;height:677px;background:#d8d8d8"></div>
<svg class="abs" style="left:0;top:0" width="10" height="10" viewBox="0 0 10 10"><path d="M0 0h9a8.5 8.5 0 0 0-8.5 9H0z" fill="#b4b7b7"/><path d="M0.5 9.5a9 9 0 0 1 9-9" stroke="#8d9090" fill="none"/></svg>
<svg class="abs" style="left:1269px;top:0" width="10" height="10" viewBox="0 0 10 10"><path d="M10 0H1a8.5 8.5 0 0 1 8.5 9H10z" fill="#b4b7b7"/><path d="M9.5 9.5a9 9 0 0 0-9-9" stroke="#9da0a0" fill="none"/></svg>
<svg class="abs" style="left:0;top:714px" width="6" height="5" viewBox="0 0 6 5"><path d="M0 0v5h6a6 6 0 0 1-5-5z" fill="#222"/></svg>
<svg class="abs" style="left:1272px;top:712px" width="7" height="7" viewBox="0 0 7 7"><path d="M7 0v7H0a7 7 0 0 0 6-7z" fill="#c8c8c8"/></svg>
</body></html>
